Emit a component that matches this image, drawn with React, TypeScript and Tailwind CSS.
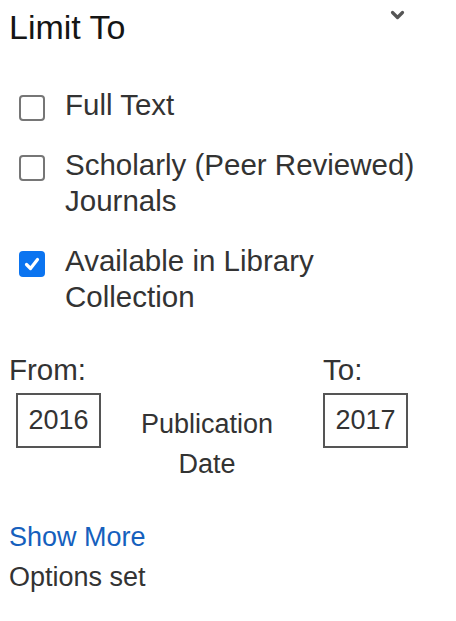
import type React from "react";

const options = [
  { label: ["Full Text"], checked: false },
  { label: ["Scholarly (Peer Reviewed)", "Journals"], checked: false },
  { label: ["Available in Library", "Collection"], checked: true },
];

const Checkbox: React.FC<{ checked: boolean }> = ({ checked }) =>
  checked ? (
    <span className="mt-[8px] ml-[10px] flex h-[26px] w-[26px] shrink-0 items-center justify-center rounded-[4px] bg-[#0b74f0]">
      <svg width="18" height="18" viewBox="0 0 18 18" fill="none">
        <path
          d="M3.5 9.5 L7.5 13.5 L14.5 4.5"
          stroke="white"
          strokeWidth="3.2"
          strokeLinecap="round"
          strokeLinejoin="round"
        />
      </svg>
    </span>
  ) : (
    <span className="mt-[8px] ml-[10px] block h-[26px] w-[26px] shrink-0 rounded-[4px] border-2 border-[#767676] bg-white" />
  );

const App: React.FC = () => {
  return (
    <div className="w-[456px] h-[621px] bg-white pl-[9px] text-[#333] font-['Liberation_Sans',Arial,sans-serif]">
      {/* Header */}
      <div className="flex items-start justify-between pt-[7px] pr-[51px]">
        <h2 className="text-[34px] leading-[40px] text-[#151515]">Limit To</h2>
        <svg width="15" height="10" viewBox="0 0 15 10" fill="none" className="mt-[3px]">
          <path
            d="M2.5 2.5 L7.5 7.5 L12.5 2.5"
            stroke="#555"
            strokeWidth="3.2"
            strokeLinecap="round"
            strokeLinejoin="round"
          />
        </svg>
      </div>

      {/* Limiters */}
      <div className="mt-[40px] flex flex-col gap-[24px]">
        {options.map((opt) => (
          <label key={opt.label[0]} className="flex items-start gap-[20px]">
            <Checkbox checked={opt.checked} />
            <span className="text-[29.5px] leading-[36px]">
              {opt.label.map((line) => (
                <span key={line} className="block">
                  {line}
                </span>
              ))}
            </span>
          </label>
        ))}
      </div>

      {/* Publication date */}
      <div className="mt-[39px] flex items-start">
        <div className="w-[122px]">
          <p className="text-[29.5px] leading-[32px]">From:</p>
          <div className="mt-[7px] ml-[7px] flex h-[55px] w-[85px] items-center justify-center border-2 border-[#555] text-[27px]">
            2016
          </div>
        </div>
        <div className="w-[152px] pt-[50px] text-center text-[27px] leading-[40px]">
          Publication
          <br />
          Date
        </div>
        <div className="ml-[40px]">
          <p className="text-[29.5px] leading-[32px]">To:</p>
          <div className="mt-[7px] flex h-[55px] w-[85px] items-center justify-center border-2 border-[#555] text-[27px]">
            2017
          </div>
        </div>
      </div>

      {/* Footer */}
      <div className="mt-[33px] text-[27px] leading-[40px]">
        <a className="block text-[#1560bd]">Show More</a>
        <p>Options set</p>
      </div>
    </div>
  );
};

export default App;
